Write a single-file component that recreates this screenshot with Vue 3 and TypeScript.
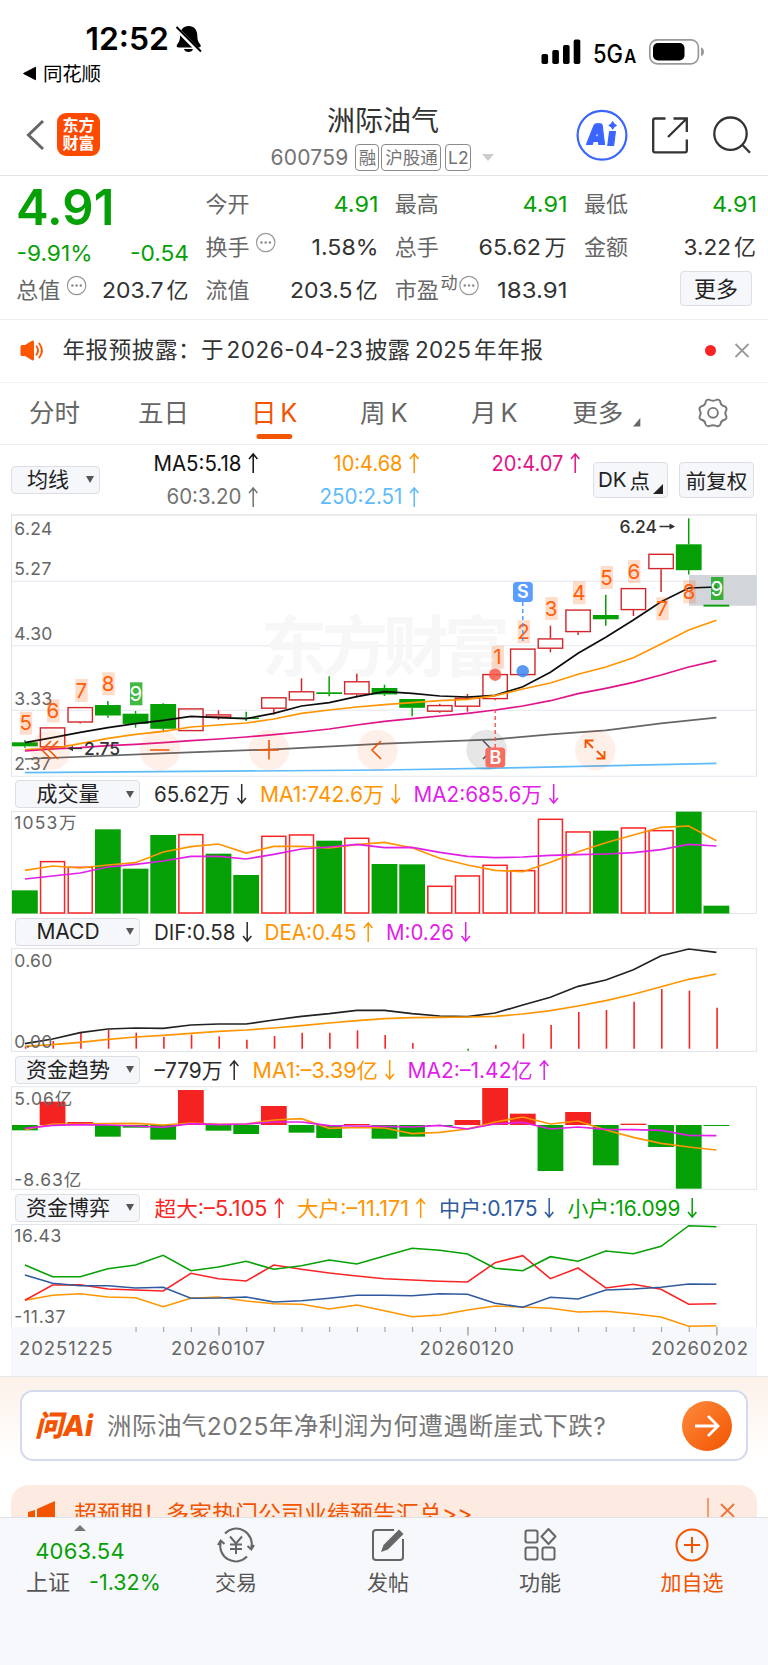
<script setup lang="ts">
type Dir = 'up' | 'down'
interface Legend { text: string; dir: Dir; color: string; x: number; w: number }
interface Candle { c: 'r' | 'g'; h: number; t: number; b: number; l: number }
interface Mark { n: string; x: number; y: number; done?: boolean }

const STEP = 27.66
const cx = (i: number): number => 24.9 + STEP * i

// Series samples are thirds of a pixel below the given origin.
const line = (origin: number, ys: number[]): string =>
  ys.map((v, i) => `${cx(i).toFixed(1)},${(origin + v / 3).toFixed(1)}`).join(' ')

const ORANGE = '#ff9500'
const PURPLE = '#e11fe8'
const BLACK = '#2b2b2b'

const candles: Candle[] = ([
  ['g', 740.3, 742.3, 746.3, 747.7], ['r', 727.3, 727.3, 747.5, 747.5], ['r', 707, 707, 722.6, 723.6],
  ['g', 701, 705, 715.5, 717.7], ['g', 711, 713.7, 723.9, 727.7], ['g', 703.3, 704, 728.8, 730.7],
  ['r', 708.3, 708.3, 731.2, 731.2], ['r', 710.3, 714.3, 717.5, 719.7], ['g', 711.7, 717.6, 719, 721],
  ['r', 697.2, 697.2, 708.8, 714.5], ['r', 678.3, 691.2, 700.5, 700.5], ['g', 676.3, 692.3, 694, 696.3],
  ['r', 673.7, 681.2, 694.5, 697.3], ['g', 684.7, 688, 694.4, 696], ['g', 699, 699, 707.8, 716.3],
  ['r', 703.7, 705, 711.8, 712.7], ['r', 694, 697.6, 706.8, 711.7], ['r', 674, 674, 699.2, 700.2],
  ['r', 648.5, 648.5, 675.2, 675.2], ['r', 625.7, 638.3, 648.8, 652.3], ['r', 609.5, 609.5, 632.2, 635],
  ['g', 594.7, 615, 619.3, 625.7], ['r', 588, 588, 610.2, 616], ['r', 553.7, 553.7, 569.2, 592],
  ['g', 518.3, 544.3, 570.2, 574.5], ['g', 604.7, 604.7, 606.6, 606.6],
] as [('r' | 'g'), number, number, number, number][]).map(([c, h, t, b, l]) => ({ c, h, t, b, l }))

const ma60: [number, number][] = [[0, 759], [5, 753.4], [9, 749.3], [13, 743.7], [17, 739.3], [19, 734.3], [21, 730.3], [23, 723.3], [25, 717.7]]
const ma250: [number, number][] = [[0, 772.7], [13, 770], [18, 767.7], [25, 763.3]]
const sparse = (p: [number, number][]): string => p.map(([i, y]) => `${cx(i)},${y}`).join(' ')

const priceLines = [
  { color: '#0d0d0d', pts: line(580, [488, 473, 457, 443, 431, 421, 409, 413, 416, 400, 378, 368, 350, 335, 340, 348, 351, 346, 320, 277, 220, 172, 120, 65, 24, 21]) },
  { color: ORANGE, pts: line(580, [509, 506, 491, 475, 463, 454, 441, 435, 429, 417, 400, 390, 381, 374, 368, 362, 358, 347, 327, 309, 283, 261, 233, 192, 150, 121]) },
  { color: '#e0148a', pts: line(580, [513, 507, 503, 497, 493, 488, 482, 477, 471, 464, 456, 447, 435, 424, 416, 408, 400, 390, 378, 362, 341, 325, 307, 285, 261, 242]) },
  { color: '#666', pts: sparse(ma60) },
  { color: '#60bbfb', pts: sparse(ma250) },
]

const marks: Mark[] = [
  { n: '5', x: 26, y: 711.7 }, { n: '6', x: 53.2, y: 699.3 }, { n: '7', x: 81.5, y: 679 },
  { n: '8', x: 108.5, y: 672.3 }, { n: '9', x: 136.2, y: 682.3, done: true },
  { n: '1', x: 497.8, y: 645.7 }, { n: '2', x: 523.8, y: 620.2 }, { n: '3', x: 551.5, y: 597 },
  { n: '4', x: 579.2, y: 581.3 }, { n: '5', x: 606.8, y: 566 }, { n: '6', x: 634.2, y: 560 },
  { n: '7', x: 662.5, y: 597.3 }, { n: '8', x: 689.5, y: 580.3 }, { n: '9', x: 717.2, y: 577, done: true },
]

const volumes = ['g271', 'r184', 'r201', 'g88', 'g206', 'g105', 'r103', 'g161', 'g225', 'r108', 'r104', 'g122', 'r114', 'g192', 'g193', 'r258', 'r227', 'r195', 'r211', 'r57', 'r95', 'g92', 'r83', 'r91', 'g35', 'g317']
  .map(s => ({ c: s[0], y: 800 + Number(s.slice(1)) / 3 }))
const volLines = [
  { color: ORANGE, pts: line(800, [211, 198, 204, 195, 188, 156, 140, 132, 159, 139, 139, 144, 134, 127, 143, 175, 195, 211, 215, 187, 155, 128, 105, 82, 78, 122]) },
  { color: PURPLE, pts: line(800, [237, 228, 219, 201, 193, 183, 169, 169, 177, 163, 147, 141, 133, 143, 142, 157, 169, 173, 171, 166, 164, 162, 158, 149, 133, 138]) },
]

const hist = [739, 723, 698, 690, 698, 711, 704, 709, 719, 708, 698, 698, 691, 705, 729, 746, 752, 735, 701, 675, 636, 630, 605, 567, 572, 623].map(v => 800 + v / 3)
const macdLines = [
  { color: '#222', pts: line(800, [731, 717, 698, 687, 684, 685, 675, 672, 672, 660, 649, 641, 631, 631, 641, 648, 650, 639, 615, 592, 559, 540, 509, 467, 447, 457]) },
  { color: ORANGE, pts: line(800, [739, 734, 727, 718, 711, 706, 700, 694, 690, 684, 677, 669, 662, 656, 653, 652, 651, 649, 642, 632, 618, 602, 583, 560, 538, 522]) },
]

const flows = [151, 65, 126, 170, 143, 179, 30, 152, 162, 78, 158, 174, 132, 176, 170, 138, 120, 24, 101, 273, 96, 256, 131, 201, 326, 138].map(v => 1080 + v / 3)
const flowLines = [
  { color: ORANGE, pts: line(1080, [149, 132, 132, 131, 130, 135, 129, 133, 132, 120, 116, 145, 142, 144, 161, 157, 147, 126, 111, 132, 123, 150, 172, 190, 201, 210]) },
  { color: PURPLE, pts: line(1080, [145, 136, 134, 135, 138, 142, 131, 134, 132, 126, 126, 137, 138, 139, 141, 136, 147, 132, 127, 147, 141, 148, 149, 151, 166, 167]) },
]

const gameLines = [
  { color: '#ff9500', pts: line(1080, [661, 646, 641, 651, 653, 680, 655, 651, 663, 671, 673, 687, 675, 692, 710, 705, 690, 678, 681, 685, 696, 694, 701, 711, 739, 737]) },
  { color: '#f92424', pts: line(1080, [661, 615, 614, 627, 630, 633, 580, 596, 603, 555, 568, 579, 588, 596, 600, 604, 606, 548, 527, 596, 564, 624, 613, 628, 673, 671]) },
  { color: '#05a005', pts: line(1080, [555, 590, 590, 566, 555, 526, 572, 561, 544, 568, 557, 540, 552, 528, 505, 511, 522, 565, 572, 530, 544, 513, 521, 499, 437, 440]) },
  { color: '#2f5a9e', pts: line(1080, [585, 610, 617, 617, 624, 622, 655, 654, 651, 666, 662, 655, 646, 646, 647, 641, 643, 670, 682, 652, 657, 630, 627, 622, 612, 613]) },
]
const ticks = Array.from({ length: 22 }, (_, k) => k + 4)

const maLegend: (Legend & { row: number })[] = [
  { row: 0, text: 'MA5:5.18', dir: 'up', color: '#111', x: 153.5, w: 88 },
  { row: 0, text: '10:4.68', dir: 'up', color: ORANGE, x: 333.5, w: 69 },
  { row: 0, text: '20:4.07', dir: 'up', color: '#e0148a', x: 491.5, w: 72 },
  { row: 1, text: '60:3.20', dir: 'up', color: '#737373', x: 166.5, w: 75 },
  { row: 1, text: '250:2.51', dir: 'up', color: '#60bbfb', x: 319.5, w: 83 },
]
const volLegend: Legend[] = [
  { text: '65.62万', dir: 'down', color: BLACK, x: 154, w: 76 },
  { text: 'MA1:742.6万', dir: 'down', color: ORANGE, x: 260, w: 124 },
  { text: 'MA2:685.6万', dir: 'down', color: PURPLE, x: 413.5, w: 128.5 },
]
const macdLegend: Legend[] = [
  { text: 'DIF:0.58', dir: 'down', color: BLACK, x: 154, w: 81.5 },
  { text: 'DEA:0.45', dir: 'up', color: ORANGE, x: 264.5, w: 92 },
  { text: 'M:0.26', dir: 'down', color: PURPLE, x: 386, w: 68 },
]
const flowLegend: Legend[] = [
  { text: '–779万', dir: 'up', color: BLACK, x: 154.5, w: 68 },
  { text: 'MA1:–3.39亿', dir: 'down', color: ORANGE, x: 252.5, w: 125.5 },
  { text: 'MA2:–1.42亿', dir: 'up', color: PURPLE, x: 407.5, w: 125 },
]
const gameLegend: Legend[] = [
  { text: '超大:–5.105', dir: 'up', color: '#f92424', x: 154.5, w: 113 },
  { text: '大户:–11.171', dir: 'up', color: ORANGE, x: 297, w: 112 },
  { text: '中户:0.175', dir: 'down', color: '#2f5a9e', x: 439, w: 98.5 },
  { text: '小户:16.099', dir: 'down', color: '#05a005', x: 567.5, w: 113 },
]
const arrow = (l: Legend, y: number): string => {
  const x = l.x + l.w + 11.7
  return l.dir === 'up'
    ? `M${x} ${y + 10}V${y - 8.5}M${x - 4.2} ${y - 4}L${x} ${y - 9}L${x + 4.2} ${y - 4}`
    : `M${x} ${y - 10}V${y + 8.5}M${x - 4.2} ${y + 4}L${x} ${y + 9}L${x + 4.2} ${y + 4}`
}
const panels = [
  { key: 'vol', name: '成交量', legend: volLegend },
  { key: 'macd', name: 'MACD', legend: macdLegend },
  { key: 'flow', name: '资金趋势', legend: flowLegend },
  { key: 'game', name: '资金博弈', legend: gameLegend },
]
</script>

<template>
  <div class="screen">
    <header class="status">
      <svg width="768" height="95" viewBox="0 0 768 95">
        <text class="clock" x="85.500" y="50.300" textLength="83.500" lengthAdjust="spacingAndGlyphs">12:52</text>
        <path d="M188.700 26c5.500 0 8.600 4 8.600 9.500 0 6 2 7.500 3 9 1 1.700.2 3-1.600 3h-20c-1.800 0-2.600-1.300-1.600-3 1-1.500 3-3 3-9 0-5.500 3.100-9.500 8.600-9.500zM184 49h9c-.6 4-8.400 4-9 0z" fill="#000" />
        <path d="M175.500 27.500L200.500 53" stroke="#fff" stroke-width="4.500" />
        <path d="M176.500 27L201 51.500" stroke="#000" stroke-width="2" />
        <path d="M23.500 73.500L35.500 67.300V79.700z" fill="#000" stroke="#000" stroke-linejoin="round" />
        <text x="43" y="80.700" font-size="19.500" textLength="58" fill="#000">同花顺</text>
        <rect x="541.500" y="54" width="6.600" height="10" rx="1.800" />
        <rect x="552.300" y="50" width="6.600" height="14" rx="1.800" />
        <rect x="563" y="45" width="6.600" height="19" rx="1.800" />
        <rect x="573.700" y="39.500" width="6.600" height="24.500" rx="1.800" />
        <text x="593" y="62.500" font-size="25.500" font-weight="500" textLength="30" lengthAdjust="spacingAndGlyphs">5G</text>
        <text x="624.300" y="62.500" font-size="19" font-weight="600" textLength="12" lengthAdjust="spacingAndGlyphs">A</text>
        <rect x="649.800" y="39.800" width="48.600" height="24" rx="7.500" fill="none" stroke="#999" stroke-width="1.700" />
        <rect x="653" y="43" width="31.500" height="17.500" rx="5" />
        <path d="M701 47.500c4 1 4 7.500 0 8.500z" fill="#999" />
      </svg>
    </header>

    <nav class="nav">
      <div class="nav-left">
        <svg width="20" height="34" viewBox="0 0 20 34"><path d="M18 3L3.500 17L18 31" fill="none" stroke="#666" stroke-width="3" /></svg>
        <div class="logo"><span>东方</span><span>财富</span></div>
      </div>
      <div class="nav-title">
        <h1>洲际油气</h1>
        <div class="sub">
          <span class="code">600759</span><i class="tag">融</i><i class="tag wide">沪股通</i><i class="tag l2">L2</i><b class="caret" />
        </div>
      </div>
      <svg class="nav-icons" width="186" height="56" viewBox="574 107 186 56" fill="none" stroke="#333" stroke-width="2.300">
        <circle cx="602" cy="135.300" r="24.400" stroke="#3a66ff" stroke-width="2.200" />
        <g fill="#3a66ff" stroke="#3a66ff" stroke-width="1.200" stroke-linejoin="round">
          <path fill-rule="evenodd" d="M586.500 144.500L594 125.500Q594.800 123.800 596.500 123.800H600.500Q602 123.800 602.200 125.500L604.500 144.500H598.800L598.500 141.300H593.300L592.200 144.500zM595 136.800H598.200L597.900 131z" />
          <path d="M609.600 131.500H615.400L613.600 145.500H607.800zM612.700 121.800L614 124.100L616.300 125.400L614 126.700L612.700 129L611.400 126.700L609.100 125.400L611.400 124.100z" />
        </g>
        <path d="M665.500 118.500H655Q653.200 118.500 653.200 120.500V150.500Q653.200 152.300 655 152.300H685Q686.800 152.300 686.800 150.500V139.500M673.500 118.500H686.800V132M686.500 118.800L668 137" />
        <circle cx="730.500" cy="133.700" r="16.200" /><path d="M742 144.500L750 152.800" />
      </svg>
    </nav>

    <section class="quote">
      <svg width="768" height="144" viewBox="0 176 768 144">
        <text class="big" x="16" y="225" textLength="98.500">4.91</text>
        <g class="num green">
          <text x="16.500" y="261.300" textLength="76" lengthAdjust="spacingAndGlyphs">-9.91%</text>
          <text x="130" y="261.300" textLength="59" lengthAdjust="spacingAndGlyphs">-0.54</text>
          <text x="333.500" y="212" textLength="45" lengthAdjust="spacingAndGlyphs">4.91</text>
          <text x="522.500" y="212" textLength="45" lengthAdjust="spacingAndGlyphs">4.91</text>
          <text x="712" y="212" textLength="45" lengthAdjust="spacingAndGlyphs">4.91</text>
        </g>
        <g class="num">
          <text x="311.500" y="255" textLength="67" lengthAdjust="spacingAndGlyphs">1.58%</text>
          <text x="478.500" y="255" textLength="62.500" lengthAdjust="spacingAndGlyphs">65.62</text><text x="544.500" y="254.700">万</text>
          <text x="683.500" y="255" textLength="47.500" lengthAdjust="spacingAndGlyphs">3.22</text><text x="734" y="254.700">亿</text>
          <text x="102" y="298" textLength="61.500" lengthAdjust="spacingAndGlyphs">203.7</text><text x="166.500" y="297.700">亿</text>
          <text x="290" y="298" textLength="62.500" lengthAdjust="spacingAndGlyphs">203.5</text><text x="355.800" y="297.700">亿</text>
          <text x="497" y="298" textLength="70.500" lengthAdjust="spacingAndGlyphs">183.91</text>
        </g>
        <g class="lab">
          <text x="205.500" y="211.700">今开</text><text x="394.700" y="211.700">最高</text><text x="584" y="211.700">最低</text>
          <text x="205.500" y="254.700">换手</text><text x="394.700" y="254.700">总手</text><text x="584" y="254.700">金额</text>
          <text x="16.300" y="297.700">总值</text><text x="205.500" y="297.700">流值</text><text x="394.700" y="297.700">市盈</text>
          <text x="440.500" y="289" font-size="17">动</text>
        </g>
        <g v-for="p in [[265.700, 242.500], [76.600, 285.500], [469, 285.500]]" :key="p[0]" fill="#888">
          <circle :cx="p[0]" :cy="p[1]" r="9.200" fill="none" stroke="#999" stroke-width="1.200" />
          <circle v-for="d in [-4.200, 0, 4.200]" :key="d" :cx="p[0] + d" :cy="p[1]" r="1.200" />
        </g>
      </svg>
      <button class="btn more">更多</button>
    </section>

    <section class="notice">
      <svg width="768" height="62" viewBox="0 320 768 62">
        <path d="M20.500 346.500Q20.500 345 22 345H25L32 340.700Q34 340 34 342V359Q34 361 32 360.300L25 356H22Q20.500 356 20.500 354.500z" fill="#fd5602" />
        <path d="M36.500 346.300Q39.500 350.500 36.500 354.800M39.300 343.500Q44.500 350.500 39.300 357.500" fill="none" stroke="#fd5602" stroke-width="1.900" stroke-linecap="round" />
        <g class="note">
          <text x="62.500" y="358.300" textLength="138">年报预披露：</text><text x="201" y="358.300">于</text>
          <text x="226.500" y="358" textLength="136.500">2026-04-23</text>
          <text x="365" y="358.300">披露</text>
          <text x="415" y="358" textLength="56">2025</text>
          <text x="474" y="358.300" textLength="69">年年报</text>
        </g>
        <circle cx="710.500" cy="350.500" r="5.500" fill="#f92424" />
        <path d="M735.500 344L748.500 357M748.500 344L735.500 357" stroke="#999" stroke-width="1.800" />
      </svg>
    </section>

    <section class="tabs">
      <svg width="768" height="62" viewBox="0 383 768 62">
        <g class="tab">
          <text x="29" y="422" textLength="51">分时</text><text x="138" y="422" textLength="51">五日</text>
          <text x="360" y="422">周</text><text x="390.500" y="422">K</text>
          <text x="471" y="422">月</text><text x="500.500" y="422">K</text>
          <text x="572.300" y="422" textLength="51">更多</text>
          <g class="on"><text x="251" y="422">日</text><text x="280.300" y="422">K</text></g>
        </g>
        <rect x="256.500" y="434" width="35.800" height="5" rx="2.500" fill="#f25400" />
        <path d="M640.300 418V426.500H633z" fill="#666" />
        <path d="M709.500 399.800Q713 401.800 716.500 399.800Q720 399 720.500 402.500Q721 405.500 725 406.500Q727.500 408 726 411Q724.500 413 726 415.500Q727.500 418.500 724.500 419.800Q721 420.500 720.500 424Q719.500 427 716.500 426Q713 424.500 709.500 426Q706.500 427 705.500 424Q705 420.500 701.500 419.800Q698.500 418.500 700 415.500Q701.500 413 700 411Q698.500 408 701 406.500Q705 405.500 705.500 402.500Q706 399 709.500 399.800z" fill="none" stroke="#777" stroke-width="1.900" />
        <circle cx="713" cy="412.800" r="4.900" fill="none" stroke="#777" stroke-width="1.900" />
      </svg>
    </section>

    <section class="ma">
      <svg class="ma-values" width="768" height="69" viewBox="0 445 768 69">
        <g v-for="l in maLegend" :key="l.text" :fill="l.color">
          <text class="leg" :x="l.x" :y="l.row ? 504.300 : 470.500" :textLength="l.w" lengthAdjust="spacingAndGlyphs">{{ l.text }}</text>
          <path :d="arrow(l, l.row ? 497 : 463)" fill="none" :stroke="l.color" stroke-width="1.500" />
        </g>
      </svg>
      <button class="btn ma-pick">均线<b class="drop" /></button>
      <span class="spacer" />
      <button class="btn dk"><span>DK</span><span>点</span><b class="corner" /></button>
      <button class="btn fq">前复权</button>
    </section>

    <svg class="chart" width="768" height="263" viewBox="0 514 768 263">
      <path d="M11.500 776.300V514.700M756.500 776.300V514.700" stroke="#dfe3ea" />
      <path d="M11 515H757" stroke="#d5d8dc" stroke-width="1.200" />
      <path d="M11 581.300H757M11 645.800H757M11 710.300H757M11 776.300H757" stroke="#e4e8ef" stroke-width="1.100" />
      <text class="mark" x="261" y="671" textLength="249">东方财富</text>
      <rect x="689" y="575" width="67.500" height="30.700" fill="#d2d5da" />
      <g class="axis">
        <text x="14.300" y="534.700" textLength="38">6.24</text><text x="14.300" y="574.700" textLength="37">5.27</text>
        <text x="14.300" y="639.700" textLength="38">4.30</text><text x="14.300" y="704.700" textLength="38">3.33</text>
        <text x="14.300" y="769.700" textLength="36.500">2.37</text>
      </g>
      <g v-for="(k, i) in candles" :key="i" :stroke="k.c === 'r' ? '#d3262b' : '#05a005'" stroke-width="1.500">
        <path v-if="k.h < k.t" :d="`M${cx(i)} ${k.h}V${k.t}`" />
        <path v-if="k.l > k.b" :d="`M${cx(i)} ${k.b}V${k.l}`" />
        <rect v-if="k.c === 'r'" :x="cx(i) - 12.200" :y="k.t + 0.600" width="24.400" :height="k.b - k.t - 1.200" fill="none" stroke-width="1.400" />
        <rect v-else :x="cx(i) - 12.900" :y="k.t" width="25.800" :height="k.b - k.t" fill="#05a005" stroke="none" />
      </g>
      <polyline v-for="(l, i) in priceLines" :key="i" :points="l.pts" fill="none" :stroke="l.color" stroke-width="1.700" />
      <g v-for="(m, i) in marks" :key="i">
        <rect :x="m.x - 6.200" :y="m.y" width="12.400" height="23" :fill="m.done ? '#05a005' : '#ff6414'" :opacity="m.done ? 0.750 : 0.220" />
        <text class="nine" :x="m.x - 0.300" :y="m.y + 18.700" :fill="m.done ? '#fff' : '#ff5f0a'">{{ m.n }}</text>
      </g>
      <g fill="none" stroke="#f25400" stroke-width="1.600">
        <circle v-for="x in [50.700, 160, 269, 377.500, 595.300]" :key="x" :cx="x" cy="750" r="20.300" fill="#f25400" fill-opacity=".09" stroke="none" />
        <circle cx="486.700" cy="750" r="20.300" fill="#333" fill-opacity=".12" stroke="none" />
        <path d="M51 741L42 750L51 759M58 741L49 750L58 759M150 750H169.500M259 750H279M269 740V759.500M381 741L372 750L381 759" />
        <path d="M585.500 748V740.500H593.500M586 741L593 748M604.500 751V758.500H596.500M604 758L597 751" stroke-width="1.800" />
        <path d="M483 740.500L492 750L483 759" stroke="#555" />
      </g>
      <text class="tip" x="84" y="755" textLength="36">2.75</text>
      <path d="M68 748.500H82" stroke="#333" stroke-width="1.300" /><path d="M68 748.500L73 745.800V751.200z" fill="#333" />
      <text class="tip" x="619.500" y="533" textLength="37.500">6.24</text>
      <path d="M659.500 526.500H674" stroke="#333" stroke-width="1.500" /><path d="M675 526.500L669.500 523.500V529.500z" fill="#333" />
      <path d="M522.800 602V641" stroke="#4b94ff" stroke-width="1.400" stroke-dasharray="4 3" />
      <path d="M495.200 709V748" stroke="#f4574b" stroke-width="1.400" stroke-dasharray="4 3" />
      <circle cx="522.700" cy="671.200" r="6.200" fill="#3d86f0" fill-opacity=".85" />
      <circle cx="495.100" cy="674.700" r="6.200" fill="#fb5748" fill-opacity=".85" />
      <rect x="513" y="582" width="19.800" height="20" rx="3.500" fill="#5b9dff" /><text class="sb" x="522.900" y="598.300">S</text>
      <rect x="485.400" y="747.600" width="19.800" height="20" rx="3.500" fill="#f76d62" /><text class="sb" x="495.500" y="764">B</text>
    </svg>

    <template v-for="p in panels" :key="p.key">
      <div class="panel-head" :class="p.key">
        <button class="btn pick"><span>{{ p.name }}</span><b class="drop" /></button>
        <svg width="628" height="34" viewBox="140 0 628 34">
          <g v-for="l in p.legend" :key="l.text" :fill="l.color">
            <text class="leg" :x="l.x" y="24.500" :textLength="l.w" lengthAdjust="spacingAndGlyphs">{{ l.text }}</text>
            <path :d="arrow(l, 17)" fill="none" :stroke="l.color" stroke-width="1.500" />
          </g>
        </svg>
      </div>

      <svg v-if="p.key === 'vol'" class="chart" width="768" height="103" viewBox="0 811 768 103">
        <rect x="11.500" y="811.500" width="745" height="102" fill="none" stroke="#e2e5ea" />
        <text class="axisc" x="14.300" y="829" textLength="43">1053</text><text class="axisc" x="59" y="829">万</text>
        <template v-for="(v, i) in volumes" :key="i">
          <rect v-if="v.c === 'r'" :x="cx(i) - 12" :y="v.y + 0.300" width="24" :height="912.700 - v.y" fill="none" stroke="#f92424" stroke-width="1.500" />
          <rect v-else :x="cx(i) - 12.900" :y="v.y" width="25.800" :height="913.500 - v.y" fill="#05a005" />
        </template>
        <polyline v-for="(l, i) in volLines" :key="l.color + i" :points="l.pts" fill="none" :stroke="l.color" stroke-width="1.700" />
      </svg>

      <svg v-if="p.key === 'macd'" class="chart" width="768" height="104" viewBox="0 948 768 104">
        <rect x="11.500" y="948.500" width="745" height="103" fill="none" stroke="#e2e5ea" />
        <path v-for="(y, i) in hist" :key="i" :d="`M${cx(i) + 0.700} 1048.700V${y}`" :stroke="i === 16 ? '#05a005' : '#f92424'" stroke-width="1.600" />
        <polyline v-for="(l, i) in macdLines" :key="l.color + i" :points="l.pts" fill="none" :stroke="l.color" stroke-width="1.700" />
        <g class="axis"><text x="14.300" y="967" textLength="38">0.60</text><text x="14.300" y="1047.700" textLength="38">0.00</text></g>
      </svg>

      <svg v-if="p.key === 'flow'" class="chart" width="768" height="104" viewBox="0 1086 768 104">
        <rect x="11.500" y="1086.700" width="745" height="102.600" fill="none" stroke="#e2e5ea" />
        <rect v-for="(y, i) in flows" :key="i" :x="cx(i) - 12.900" :y="Math.min(y, 1125)" width="25.800" :height="Math.abs(y - 1125)" :fill="y < 1125 ? '#f52222' : '#05a005'" />
        <polyline v-for="(l, i) in flowLines" :key="l.color + i" :points="l.pts" fill="none" :stroke="l.color" stroke-width="1.700" />
        <g class="axisc"><text x="14.300" y="1104.500" textLength="58">5.06亿</text><text x="14.300" y="1185.500" textLength="67">-8.63亿</text></g>
      </svg>

      <svg v-if="p.key === 'game'" class="chart" width="768" height="152" viewBox="0 1224 768 152">
        <path d="M11.500 1327V1224.500H756.500V1327" fill="none" stroke="#e2e5ea" />
        <rect x="11" y="1327" width="746" height="50" fill="#f7f8fb" />
        <polyline v-for="(l, i) in gameLines" :key="l.color + i" :points="l.pts" fill="none" :stroke="l.color" stroke-width="1.600" />
        <g class="axis"><text x="14.300" y="1242.300" textLength="47">16.43</text><text x="14.300" y="1323.300" textLength="51">-11.37</text></g>
        <path v-for="i in ticks" :key="i" :d="`M${cx(i) + 0.500} 1327V${i % 9 === 7 ? 1335.500 : 1332}`" stroke="#999" :stroke-width="i % 9 === 7 ? 1.300 : 1" />
        <g class="date">
          <text x="19" y="1355" textLength="93.500">20251225</text><text x="171" y="1355" textLength="94">20260107</text>
          <text x="419.500" y="1355" textLength="94.500">20260120</text><text x="651" y="1355" textLength="97">20260202</text>
        </g>
      </svg>
    </template>

    <section class="ask">
      <div class="ask-box">
        <svg width="60" height="36" viewBox="0 0 60 36"><g class="wen"><text x="-1" y="27.500" textLength="28" lengthAdjust="spacingAndGlyphs">问</text><text x="27" y="27.500" textLength="30" lengthAdjust="spacingAndGlyphs">Ai</text></g></svg>
        <span class="ask-text">洲际油气2025年净利润为何遭遇断崖式下跌?</span>
        <span class="go"><svg width="26" height="24" viewBox="0 0 26 24"><path d="M1 12H24M14 2L24 12L14 22" fill="none" stroke="#fff" stroke-width="2.800" /></svg></span>
      </div>
      <div class="banner">
        <svg width="30" height="34" viewBox="0 0 30 34"><path d="M1 15L8 13V27L1 25zM10 12L28 4V33L10 27z" fill="#f25400" /></svg>
        <span class="banner-text">超预期！多家热门公司业绩预告汇总&gt;&gt;</span>
        <svg class="bx" width="34" height="28" viewBox="0 0 34 28"><path d="M3 1V26" stroke="#f0703a" stroke-width="1.300" /><path d="M16 7L29 20M29 7L16 20" stroke="#f0703a" stroke-width="1.800" /></svg>
      </div>
    </section>

    <footer class="bar">
      <div class="index">
        <b class="tri" />
        <div class="g">4063.54</div>
        <div class="row"><span>上证</span><span class="pct">-1.32%</span></div>
      </div>
      <div class="item">
        <svg width="40" height="38" viewBox="0 0 40 38" fill="none" stroke="#666" stroke-width="2"><path d="M9 7.500A15.500 15.500 0 0 1 35.300 22M31 30.500A15.500 15.500 0 0 1 4.700 16M31.500 20L35.300 23.500L38 19M2 19L4.700 14.500L8.500 18M14 10.500L20 17.500L26 10.500M20 17.500V28M14 18.500H26M14 23H26" /></svg>
        <span>交易</span>
      </div>
      <div class="item">
        <svg width="40" height="38" viewBox="0 0 40 38" fill="none" stroke="#666" stroke-width="2"><path d="M26 4H8Q5 4 5 7V31Q5 34 8 34H32Q35 34 35 31V13" /><path d="M13 26L15.500 19L31 3.500L35.500 8L20 23.500z" fill="#666" stroke="none" /></svg>
        <span>发帖</span>
      </div>
      <div class="item">
        <svg width="40" height="38" viewBox="0 0 40 38" fill="none" stroke="#666" stroke-width="2"><rect x="5.500" y="4.500" width="12" height="12" rx="2" /><rect x="5.500" y="21.500" width="12" height="12" rx="2" /><rect x="22.500" y="21.500" width="12" height="12" rx="2" /><path d="M28.500 3L35.500 10.500L28.500 18L21.500 10.500z" stroke-linejoin="round" /></svg>
        <span>功能</span>
      </div>
      <div class="item hot">
        <svg width="40" height="38" viewBox="0 0 40 38" fill="none" stroke="#f25400" stroke-width="2"><circle cx="20" cy="19" r="15.500" /><path d="M12 19H28M20 11V27" /></svg>
        <span>加自选</span>
      </div>
    </footer>
  </div>
</template>

<style>
body { margin: 0; background: #fff; }
</style>

<style scoped>
.screen { width: 768px; height: 1665px; overflow: hidden; display: flex; flex-direction: column; background: #fff; color: #333; font-family: Inter, "Noto Sans CJK SC", sans-serif; }
.screen > * { flex: none; box-sizing: border-box; }
svg { display: block; }
svg text { font-family: Inter, "Noto Sans CJK SC", sans-serif; }
button { font-family: inherit; }
.status { height: 95px; }
.clock { font-size: 31.5px; font-weight: 600; }
.nav { height: 81px; border-bottom: 1px solid #e4e4e6; display: grid; grid-template-columns: 194px 380px 194px; }
.nav-left { display: flex; gap: 12px; padding: 18px 0 0 25px; }
.nav-left svg { margin-top: 5px; }
.logo { width: 43px; height: 43px; border-radius: 9px; background: #fd4a02; color: #fff; font-size: 16px; font-weight: 700; line-height: 17.5px; display: flex; flex-direction: column; align-items: center; justify-content: center; }
.nav-title { display: flex; flex-direction: column; align-items: center; }
h1 { margin: 8px 0 0; font-size: 28px; line-height: 36px; font-weight: 400; color: #333; padding-right: 2px; }
.sub { display: flex; align-items: center; height: 28px; margin-top: 4px; padding-right: 3px; }
.code { font-size: 21px; color: #737373; margin-right: 7px; letter-spacing: .2px; }
.tag { box-sizing: border-box; font-style: normal; height: 27px; border: 1.3px solid #8b8b8b; border-radius: 4px; font-size: 17.5px; line-height: 25px; width: 24px; text-align: center; color: #737373; margin-right: 2px; }
.wide { width: 60px; margin-right: 4px; }
.l2 { width: 26px; margin-right: 11px; }
.caret { border: 6px solid transparent; border-top: 7px solid #ccc; border-bottom: 0; }
.nav-icons { margin-top: 12px; }
.quote { height: 144px; border-bottom: 1px solid #eee; display: grid; }
.quote > * { grid-area: 1 / 1; }
.big { font-size: 49px; font-weight: 600; fill: #05a005; }
.num { font-size: 22px; fill: #333; }
.num.green { fill: #05a005; }
.lab { font-size: 22px; fill: #666; }
.btn { box-sizing: border-box; background: #f6f7fb; border: 1.3px solid #dcdee4; border-radius: 4px; color: #222; padding: 0; }
.more { width: 72px; height: 35px; justify-self: end; margin: 95px 16px 0 0; font-size: 22px; line-height: 32px; }
.notice { height: 63px; border-bottom: 1px solid #f1f1f1; }
.note { font-size: 22.5px; fill: #333; }
.tabs { height: 62px; border-bottom: 1px solid #eee; }
.tab { font-size: 25.5px; fill: #666; }
.on { fill: #f25400; }
.ma { height: 69px; display: grid; grid-template-columns: 11px 89px 1fr 75px 11px 75px 14px; align-items: center; }
.ma-values { grid-area: 1 / 1 / 2 / 8; }
.ma-pick { grid-area: 1 / 2; height: 28px; font-size: 21px; line-height: 26px; display: flex; align-items: center; justify-content: space-between; padding: 0 5px 0 15px; }
.spacer { grid-area: 1 / 3; }
.dk { grid-area: 1 / 4; height: 36px; font-size: 20.5px; display: flex; align-items: center; padding-left: 4px; gap: 3px; white-space: nowrap; }
.fq { grid-area: 1 / 6; height: 36px; font-size: 20.5px; }
.drop { border: 4.5px solid transparent; border-top: 7px solid #555; border-bottom: 0; }
.corner { align-self: end; margin-bottom: 3px; border-left: 10px solid transparent; border-bottom: 10px solid #222; }
.leg { font-size: 21px; }
.axis, .axisc { font-size: 17.5px; fill: #666; }
.mark { font-size: 66px; font-weight: 700; fill: #f7f7f7; }
.nine { font-size: 20.5px; text-anchor: middle; }
.tip { font-size: 17.5px; font-weight: 500; fill: #333; }
.sb { font-size: 18px; font-weight: 600; fill: #fff; text-anchor: middle; }
.panel-head { height: 34px; display: flex; align-items: center; padding-left: 15px; }
.macd, .flow, .game { padding-top: 1px; }
.pick { width: 125px; height: 28px; font-size: 21px; line-height: 26px; display: flex; align-items: center; justify-content: space-between; padding: 0 5px 0 0; }
.pick span { flex: 1; text-align: center; padding-right: 6px; }
.date { font-size: 18.5px; fill: #666; }
.ask { height: 141px; overflow: hidden; background: linear-gradient(#fdf1ea, #fff 60%); border-top: 1px solid #e6e6ea; padding-top: 13px; }
.ask-box { box-sizing: border-box; margin: 0 20px; height: 71px; border: 2px solid #d3d9ee; border-radius: 13px; background: #fff; display: flex; align-items: center; padding: 0 14px; }
.wen { font-size: 29px; font-weight: 800; font-style: italic; fill: #f25400; }
.ask-text { flex: 1; margin: 0 0 2px 11px; font-size: 24.5px; letter-spacing: .45px; color: #777; white-space: nowrap; }
.go { width: 50px; height: 50px; border-radius: 50%; background: linear-gradient(135deg, #ff8a3d, #f25400); display: flex; align-items: center; justify-content: center; }
.banner { height: 60px; margin: 24px 11px 0; border-radius: 18px 18px 0 0; background: #fdeae0; display: flex; align-items: flex-start; padding: 12px 18px 0 16px; color: #f25400; }
.banner-text { flex: 1; font-size: 23px; line-height: 34px; margin-left: 17px; }
.bar { height: 148px; background: #f7f8fc; border-top: 1px solid #dfe1e6; display: grid; grid-template-columns: 160px repeat(4, 152px); }
.index { display: flex; flex-direction: column; align-items: center; font-size: 22px; line-height: 30px; }
.tri { border: 6px solid transparent; border-bottom: 6px solid #777; border-top: 0; margin-top: 7px; }
.g { color: #05a005; margin-top: 5px; letter-spacing: .15px; }
.row { display: flex; gap: 19px; color: #555; font-size: 22px; margin-left: 26px; margin-top: 1px; align-self: flex-start; white-space: nowrap; }
.row span { flex: none; }
.pct { color: #05a005; font-size: 21.5px; }
.item { display: flex; flex-direction: column; align-items: center; padding-top: 8px; font-size: 21px; line-height: 30px; color: #555; gap: 4px; }
.hot { color: #f25400; }
</style>
